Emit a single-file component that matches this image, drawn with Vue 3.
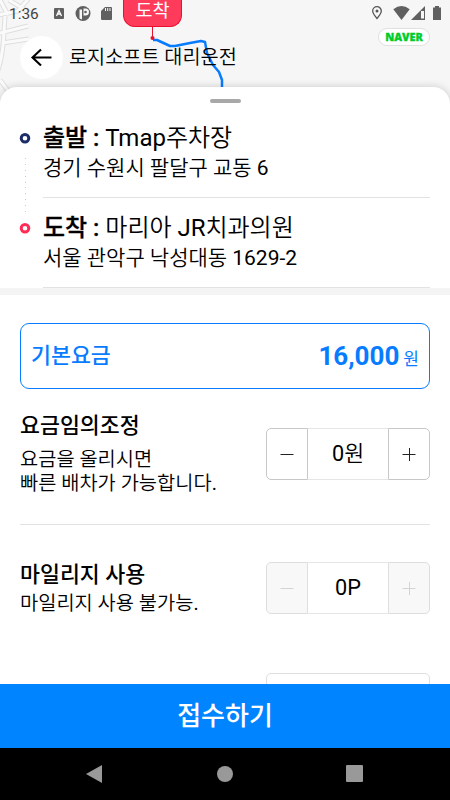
<script setup>
const stops = [
  { kind: 'start', label: '출발 :', name: 'Tmap주차장', address: '경기 수원시 팔달구 교동 6' },
  { kind: 'end', label: '도착 :', name: '마리아 JR치과의원', address: '서울 관악구 낙성대동 1629-2' },
]

// Latin letters and digits are set one step heavier than the Hangul around them.
const runs = (text) =>
  text
    .split(/([A-Za-z0-9-]+)/)
    .filter(Boolean)
    .map((part) => ({ part, latin: /^[A-Za-z0-9-]/.test(part) }))
</script>

<template>
  <div class="screen">
    <svg class="map" width="450" height="110" viewBox="0 0 450 110">
      <g fill="none" stroke="#dedede" stroke-width="5">
        <path d="M-2 15L18 11L29 -2M0 0L8 15M0 33L28 26M2 43L29 39M4 32Q3 55 -2 70M0 80L9 92M5 16L4 32M9 0L32 14" />
      </g>
      <g fill="none" stroke="#fafafa" stroke-width="3">
        <path d="M-2 15L18 11L29 -2M0 0L8 15M0 33L28 26M2 43L29 39M4 32Q3 55 -2 70M0 80L9 92M5 16L4 32M9 0L32 14" />
      </g>
      <path d="M153 40L157 40L170 46L175 46L190 43L201 41L205 42L207 53L213 65L219 72L222 80V88" fill="none" stroke="#087cff" stroke-width="2.5" stroke-linejoin="round" />
      <path d="M152.500 26V38" stroke="#e80f2f" stroke-width="1" />
      <circle cx="152.500" cy="38" r="2" fill="#e80f2f" />
    </svg>
    <div class="pin">도착</div>

    <div class="top">
      <div class="status">
        <span class="clock">1:36</span>
        <svg class="status-left" width="62" height="18" viewBox="52 5 62 18">
          <rect x="54" y="8" width="10" height="11" rx="1" fill="#606060" />
          <path d="M56.500 16L59 10.500L61.500 16M57.500 14H60.500" fill="none" stroke="#fff" stroke-width="1.300" />
          <circle cx="83" cy="13.500" r="7.500" fill="#606060" />
          <path d="M79.500 9.500H82V19.500L79.500 18.500Z" fill="#f6f6f6" />
          <path d="M83.500 8.500H85.500A3.500 3.500 0 0 1 85.500 15.500H83.500Z" fill="#f6f6f6" />
          <circle cx="85.500" cy="12" r="1.300" fill="#606060" />
          <path d="M105 7H111Q112 7 112 8V19Q112 20 111 20H102Q101 20 101 19V11Z" fill="#606060" />
          <path d="M105.500 8V11M107.700 8V11M110 8V11" stroke="#f6f6f6" stroke-width="1" />
        </svg>
        <svg class="status-right" width="74" height="18" viewBox="370 5 74 18">
          <path d="M377 18.500Q372.700 13.500 372.700 11A4.300 4.300 0 0 1 381.300 11Q381.300 13.500 377 18.500Z" fill="none" stroke="#555" stroke-width="1.300" />
          <circle cx="377" cy="11" r="1.500" fill="#555" />
          <path d="M401.500 20L393.300 9.200Q401.500 2.800 409.700 9.200Z" fill="#606060" />
          <path d="M425 6V20H411Z" fill="#606060" />
          <path d="M421 11H424V18.500H421Z" fill="#f6f6f6" />
          <path d="M435 6H439V7.500H441V20H433V7.500H435Z" fill="#606060" />
        </svg>
      </div>
      <div class="header">
        <button class="back" aria-label="뒤로">
          <svg width="43" height="43" viewBox="0 0 43 43">
            <path d="M31.500 21.500H12.500M21 13.500L12.500 21.500L21 29.500" fill="none" stroke="#000" stroke-width="2.100" />
          </svg>
        </button>
        <span class="company">로지소프트 대리운전</span>
        <span class="naver">NAVER</span>
      </div>
    </div>

    <main class="sheet">
      <div class="handle"></div>
      <section class="route">
        <div v-for="stop in stops" :key="stop.kind" class="stop" :class="stop.kind">
          <div class="rail">
            <svg width="12" height="12" viewBox="0 0 12 12">
              <circle class="ring" cx="6" cy="6.300" r="3.800" fill="#fff" stroke-width="3" />
            </svg>
            <div v-if="stop.kind === 'start'" class="dots">
              <i v-for="n in 10" :key="n"></i>
            </div>
          </div>
          <div class="place">
            <div class="place-name"><b>{{ stop.label }}</b>&nbsp;<span v-for="(run, i) in runs(stop.name)" :key="i" :class="{ latin: run.latin }">{{ run.part }}</span></div>
            <div class="address"><span v-for="(run, i) in runs(stop.address)" :key="i" :class="{ latin: run.latin }">{{ run.part }}</span></div>
          </div>
        </div>
      </section>
      <div class="band"></div>

      <section class="fare">
        <span class="fare-label">기본요금</span>
        <span class="fare-value">16,000</span>
        <span class="fare-unit">원</span>
      </section>

      <section class="row adjust">
        <div>
          <h2>요금임의조정</h2>
          <p>요금을 올리시면<br />빠른 배차가 가능합니다<span class="latin">.</span></p>
        </div>
        <div class="stepper">
          <button aria-label="감소"><svg width="14" height="14"><path d="M.5 7.500H13.500" /></svg></button>
          <div class="amount"><span class="latin">0</span>원</div>
          <button aria-label="증가"><svg width="14" height="14"><path d="M.5 7.500H13.500M7.500 1V14" /></svg></button>
        </div>
      </section>

      <section class="row mileage">
        <div>
          <h2>마일리지 사용</h2>
          <p>마일리지 사용 불가능<span class="latin">.</span></p>
        </div>
        <div class="stepper disabled">
          <button disabled aria-label="감소"><svg width="14" height="14"><path d="M.5 7.500H13.500" /></svg></button>
          <div class="amount"><span class="latin">0P</span></div>
          <button disabled aria-label="증가"><svg width="14" height="14"><path d="M.5 7.500H13.500M7.500 1V14" /></svg></button>
        </div>
      </section>

      <div class="next-field"></div>
    </main>

    <button class="submit">접수하기</button>
    <nav class="system-nav">
      <svg width="450" height="52" viewBox="0 748 450 52" fill="#999">
        <path d="M102 765V783L86 774Z" />
        <circle cx="225" cy="774" r="8" />
        <rect x="346" y="765" width="17" height="17" rx="1" />
      </svg>
    </nav>
  </div>
</template>

<style>
body {
  margin: 0;
}
</style>

<style scoped>
* {
  box-sizing: border-box;
}
.screen {
  position: relative;
  width: 450px;
  height: 800px;
  display: flex;
  flex-direction: column;
  overflow: hidden;
  background: #f6f6f6;
  color: #000;
  font-family: Roboto, "Noto Sans CJK KR", sans-serif;
  white-space: nowrap;
}
button {
  font: inherit;
  padding: 0;
  border: 0;
}
svg {
  display: block;
}
.latin {
  font-weight: 400;
}
.map {
  position: absolute;
  left: 0;
  top: 0;
}
.pin {
  position: absolute;
  left: 123px;
  top: 0;
  width: 59px;
  height: 27px;
  border: 1px solid #e80f2f;
  border-top: 0;
  border-radius: 0 0 12px 12px;
  background: #ff3b5c;
  color: #fff;
  font-size: 18.500px;
  line-height: 22px;
  text-align: center;
}
.top {
  position: relative;
  height: 87px;
  flex: none;
}
.status {
  display: flex;
  height: 28px;
  padding: 5px 6px 0 9px;
}
.clock {
  width: 43px;
  font-size: 15.400px;
  line-height: 18px;
  color: #444;
}
.status-right {
  margin-left: auto;
}
.header {
  display: flex;
  align-items: center;
  height: 58px;
  padding: 0 20px;
}
.back {
  width: 43px;
  height: 43px;
  border-radius: 50%;
  background: #fff;
}
.company {
  margin: 2px 0 0 6px;
  font-size: 19.700px;
  font-weight: 350;
  line-height: 28px;
}
.naver {
  align-self: flex-start;
  width: 52px;
  height: 18px;
  margin: 0 0 0 auto;
  border: 1px solid #e0e0e0;
  border-radius: 9px;
  background: #fff;
  color: #00cc2c;
  font-family: "Open Sans", sans-serif;
  font-size: 10.800px;
  font-weight: 800;
  -webkit-text-stroke: 0.3px #00cc2c;
  line-height: 16px;
  text-align: center;
}
.sheet {
  position: relative;
  flex: none;
  height: 597px;
  border-radius: 17px 17px 0 0;
  background: #fff;
  box-shadow: 0 0 8px rgba(0, 0, 0, 0.18);
  overflow: hidden;
}
.handle {
  width: 31px;
  height: 4px;
  margin: 12px auto 0;
  border-radius: 2px;
  background: #a8a8a8;
}
.route {
  height: 185px;
  padding: 18px 20px 0 19px;
}
.stop {
  display: flex;
  height: 90px;
}
.rail {
  width: 24px;
  padding-top: 11px;
}
.start .ring {
  stroke: #1d2d68;
}
.end .ring {
  stroke: #ff2d55;
}
.dots {
  display: flex;
  flex-direction: column;
  justify-content: space-between;
  height: 54px;
  margin: 14px 0 0 6px;
}
.dots i {
  width: 1px;
  height: 1px;
  background: #ccc;
}
.place {
  flex: 1;
  height: 77px;
  border-bottom: 1px solid #e2e2e2;
}
.place-name {
  height: 33px;
  font-size: 24px;
  font-weight: 350;
  line-height: 34px;
}
.place-name b {
  font-weight: 500;
  -webkit-text-stroke: 0.3px #000;
}
.address {
  font-size: 21px;
  font-weight: 350;
  line-height: 28px;
}
.band {
  height: 7px;
  background: #f4f4f4;
}
.fare {
  display: flex;
  align-items: center;
  height: 66px;
  margin: 28px 20px 0;
  padding: 0 10px;
  border: 1px solid #087cff;
  border-radius: 9px;
  color: #087cff;
}
.fare-label {
  margin-bottom: 5px;
  font-size: 21.700px;
  font-weight: 500;
}
.fare-value {
  margin-left: auto;
  font-size: 26px;
  font-weight: 700;
}
.fare-unit {
  margin: 2px 0 0 4px;
  font-size: 17px;
}
.row {
  display: flex;
  justify-content: space-between;
  margin: 0 20px;
}
.adjust {
  height: 136px;
  padding-top: 20px;
  border-bottom: 1px solid #e2e2e2;
}
h2 {
  margin: 0;
  font-size: 21.700px;
  font-weight: 500;
  line-height: 34px;
}
p {
  margin: 5px 0 0;
  font-size: 19.800px;
  font-weight: 350;
  line-height: 24px;
}
.mileage {
  height: 148px;
  padding-top: 33px;
}
.mileage p {
  margin-top: 0;
}
.stepper {
  display: grid;
  grid-template-columns: 42px 80px 42px;
  width: 164px;
  height: 52px;
  margin-top: 19px;
  border-radius: 5px;
  background: #fff;
}
.mileage .stepper {
  margin-top: 4px;
}
.stepper button {
  display: flex;
  align-items: center;
  justify-content: center;
  border: 1px solid #c8c8c8;
  border-radius: 5px 0 0 5px;
  background: #fff;
}
.stepper button:last-child {
  border-radius: 0 5px 5px 0;
}
.stepper path {
  fill: none;
  stroke: #222;
  stroke-width: 1px;
}
.amount {
  height: 52px;
  border: solid #e5e5e5;
  border-width: 1px 0;
  font-size: 21.700px;
  font-weight: 350;
  line-height: 50px;
  text-align: center;
}
.disabled button {
  border-color: #dedede;
  background: #f8f8f8;
}
.disabled path {
  stroke: #d4d4d4;
}
.next-field {
  width: 164px;
  height: 52px;
  margin: 0 20px 0 auto;
  border: 1px solid #dedede;
  border-radius: 5px;
}
.submit {
  position: relative;
  flex: none;
  height: 64px;
  background: #0084ff;
  color: #fff;
  font-size: 26px;
  font-weight: 500;
  line-height: 60px;
}
.system-nav {
  flex: none;
  height: 52px;
  background: #000;
}
</style>
